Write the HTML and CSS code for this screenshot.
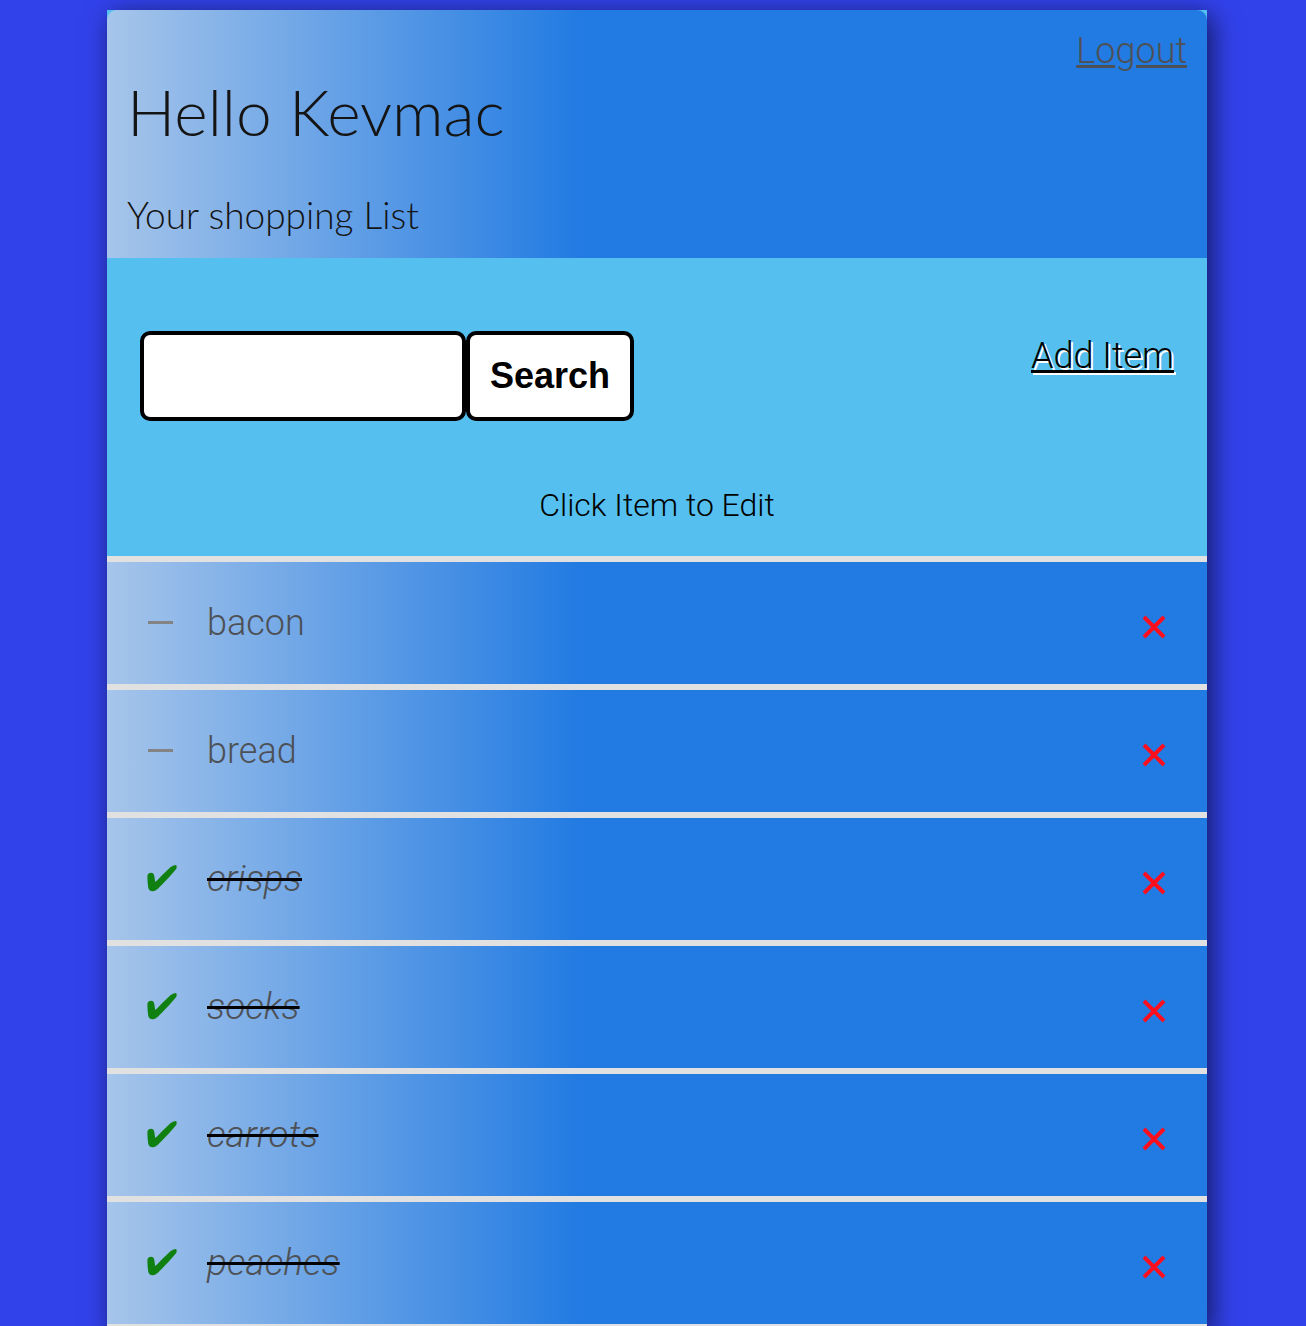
FILE: index.html
```html
<!DOCTYPE html>
<html lang="en">
<head>
<meta charset="utf-8">
<meta name="viewport" content="width=device-width, initial-scale=1">
<title>Shopping List</title>
<link rel="stylesheet" href="styles.css">
</head>
<body>
<svg class="sprite" aria-hidden="true">
  <symbol id="tick" viewBox="0 0 88 80"><path d="M1 30Q2 24 11 23C22 22 21 35 24 50C29 48 48 25 70 6Q78 0 86 0Q89 6 86 12Q65 38 31 71Q22 79 16 78Q5 78 3 66Q0 45 1 30Z"/></symbol>
  <symbol id="dash" viewBox="0 0 25 3"><path d="M0 0H25V3H0Z"/></symbol>
  <symbol id="cross" viewBox="0 0 24 24"><path d="M2 2L22 22M22 2L2 22" fill="none" stroke="currentColor" stroke-width="4"/></symbol>
</svg>
<main class="app">
  <header class="header">
    <a class="logout" href="#">Logout</a>
    <h1 class="title">Hello Kevmac</h1>
    <h2 class="subtitle">Your shopping List</h2>
  </header>
  <section class="tools">
    <div class="toolbar">
      <form class="search">
        <input class="search-input" type="text" name="search" aria-label="Search items">
        <button class="search-button" type="submit">Search</button>
      </form>
      <a class="add" href="#">Add Item</a>
    </div>
    <p class="hint">Click Item to Edit</p>
  </section>
  <ul class="list">
    <li class="item">
      <button class="toggle" type="button" aria-label="Mark bacon as done"><svg class="dash"><use href="#dash"/></svg></button>
      <a class="name" href="#">bacon</a>
      <button class="delete" type="button" aria-label="Delete bacon"><svg class="cross"><use href="#cross"/></svg></button>
    </li>
    <li class="item">
      <button class="toggle" type="button" aria-label="Mark bread as done"><svg class="dash"><use href="#dash"/></svg></button>
      <a class="name" href="#">bread</a>
      <button class="delete" type="button" aria-label="Delete bread"><svg class="cross"><use href="#cross"/></svg></button>
    </li>
    <li class="item">
      <button class="toggle" type="button" aria-label="Mark crisps as not done"><svg class="tick"><use href="#tick"/></svg></button>
      <a class="name done" href="#">crisps</a>
      <button class="delete" type="button" aria-label="Delete crisps"><svg class="cross"><use href="#cross"/></svg></button>
    </li>
    <li class="item">
      <button class="toggle" type="button" aria-label="Mark socks as not done"><svg class="tick"><use href="#tick"/></svg></button>
      <a class="name done" href="#">socks</a>
      <button class="delete" type="button" aria-label="Delete socks"><svg class="cross"><use href="#cross"/></svg></button>
    </li>
    <li class="item">
      <button class="toggle" type="button" aria-label="Mark carrots as not done"><svg class="tick"><use href="#tick"/></svg></button>
      <a class="name done" href="#">carrots</a>
      <button class="delete" type="button" aria-label="Delete carrots"><svg class="cross"><use href="#cross"/></svg></button>
    </li>
    <li class="item">
      <button class="toggle" type="button" aria-label="Mark peaches as not done"><svg class="tick"><use href="#tick"/></svg></button>
      <a class="name done" href="#">peaches</a>
      <button class="delete" type="button" aria-label="Delete peaches"><svg class="cross"><use href="#cross"/></svg></button>
    </li>
  </ul>
</main>
</body>
</html>
```
FILE: styles.css
```css
* {
  box-sizing: border-box;
}

body {
  margin: 0;
  padding: 10px 0 0 8px;
  background: #3242eb;
  color: #4d5156;
  font: 300 36px/44px Roboto, sans-serif;
}

.sprite {
  display: none;
}

.app {
  max-width: 1100px;
  margin: 0 auto;
  background: #55c0ef;
  border-bottom: 6px solid #e1e1e1;
  box-shadow: 5px 5px 25px rgba(0, 0, 0, 0.6);
}

.header,
.item {
  background: linear-gradient(to right, #a6c5ea, #227be2 43%);
}

.header {
  display: flex;
  flex-direction: column;
  padding: 19px 20px;
  border-radius: 10px 10px 0 0;
  color: #141414;
}

.logout {
  align-self: flex-end;
  color: #4d5156;
}

.title,
.subtitle {
  margin: 0;
  font-family: Lato, sans-serif;
  font-weight: 300;
}

.title {
  font-size: 64px;
  line-height: 78px;
}

.subtitle {
  margin-top: 40px;
  font-size: 37px;
  line-height: 48px;
}

.tools {
  padding: 73px 33px 29px;
  color: #000;
}

.toolbar {
  display: flex;
  justify-content: space-between;
  align-items: flex-start;
}

.search {
  display: flex;
}

.search-input,
.search-button {
  height: 90px;
  border: 4px solid #000;
  border-radius: 10px;
  background: #fff;
  color: #000;
  font: 36px "Liberation Sans", Arial, sans-serif;
}

.search-input {
  width: 326px;
  padding: 0 20px;
}

.search-button {
  width: 168px;
  padding: 0;
  font-weight: 700;
}

.add {
  margin-top: 3px;
  color: #000;
  text-shadow: 2px 2px #fff;
}

.hint {
  margin: 62px 0 0;
  font-size: 32px;
  text-align: center;
}

.list {
  margin: 0;
  padding: 0;
  list-style: none;
}

.item {
  display: flex;
  align-items: center;
  height: 128px;
  padding: 0 40px;
  border-top: 6px solid #e1e1e1;
  background-origin: border-box;
}

.toggle,
.delete {
  display: flex;
  align-items: center;
  height: 44px;
  padding: 0;
  border: 0;
  background: none;
}

.toggle {
  width: 60px;
  padding-bottom: 2px;
}

.delete {
  margin-left: auto;
  padding-top: 8px;
  color: #ff0f1e;
}

.dash {
  width: 27px;
  height: 3px;
  fill: #838383;
}

.tick {
  width: 30px;
  height: 27px;
  fill: #108010;
}

.cross {
  width: 26px;
  height: 24px;
}

.name {
  color: #4d5156;
  text-decoration: none;
}

.done {
  font-size: 37px;
  font-style: italic;
  text-decoration: line-through 3px #000;
}
```
